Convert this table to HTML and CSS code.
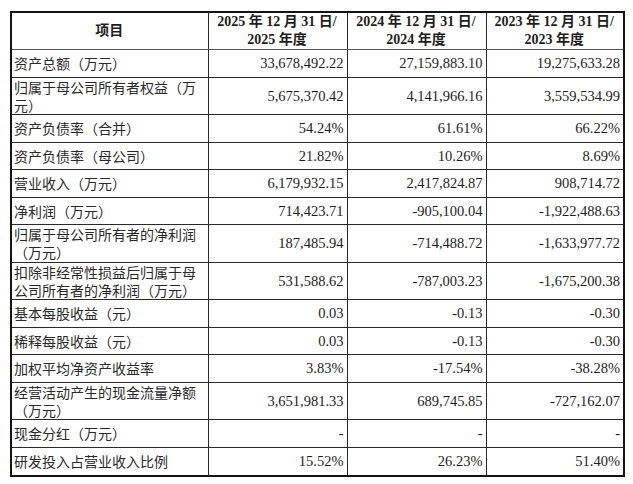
FILE: index.html
```html
<!DOCTYPE html>
<html lang="zh-CN">
<head>
<meta charset="utf-8">
<title>主要财务数据</title>
<link rel="stylesheet" href="styles.css">
</head>
<body>
<div class="frame">
<table class="fin">
<colgroup>
<col class="c-label"><col class="c-val"><col class="c-val"><col class="c-val c-last">
</colgroup>
<thead>
<tr class="head">
<th>项目</th>
<th>2025 年 12 月 31 日/<br>2025 年度</th>
<th>2024 年 12 月 31 日/<br>2024 年度</th>
<th>2023 年 12 月 31 日/<br>2023 年度</th>
</tr>
</thead>
<tbody>
<tr class="one"><td>资产总额（万元）</td><td>33,678,492.22</td><td>27,159,883.10</td><td>19,275,633.28</td></tr>
<tr class="two"><td>归属于母公司所有者权益（万元）</td><td>5,675,370.42</td><td>4,141,966.16</td><td>3,559,534.99</td></tr>
<tr class="one"><td>资产负债率（合并）</td><td>54.24%</td><td>61.61%</td><td>66.22%</td></tr>
<tr class="one"><td>资产负债率（母公司）</td><td>21.82%</td><td>10.26%</td><td>8.69%</td></tr>
<tr class="one"><td>营业收入（万元）</td><td>6,179,932.15</td><td>2,417,824.87</td><td>908,714.72</td></tr>
<tr class="one"><td>净利润（万元）</td><td>714,423.71</td><td>-905,100.04</td><td>-1,922,488.63</td></tr>
<tr class="two"><td>归属于母公司所有者的净利润（万元）</td><td>187,485.94</td><td>-714,488.72</td><td>-1,633,977.72</td></tr>
<tr class="two"><td>扣除非经常性损益后归属于母公司所有者的净利润（万元）</td><td>531,588.62</td><td>-787,003.23</td><td>-1,675,200.38</td></tr>
<tr class="one"><td>基本每股收益（元）</td><td>0.03</td><td>-0.13</td><td>-0.30</td></tr>
<tr class="one"><td>稀释每股收益（元）</td><td>0.03</td><td>-0.13</td><td>-0.30</td></tr>
<tr class="one"><td>加权平均净资产收益率</td><td>3.83%</td><td>-17.54%</td><td>-38.28%</td></tr>
<tr class="two"><td>经营活动产生的现金流量净额（万元）</td><td>3,651,981.33</td><td>689,745.85</td><td>-727,162.07</td></tr>
<tr class="one"><td>现金分红（万元）</td><td>-</td><td>-</td><td>-</td></tr>
<tr class="one last"><td>研发投入占营业收入比例</td><td>15.52%</td><td>26.23%</td><td>51.40%</td></tr>
</tbody>
</table>
</div>
</body>
</html>
```

FILE: styles.css
```css
html, body {
  margin: 0;
  padding: 0;
  background: #ffffff;
}

body {
  padding: 11px 0 0 10px;
  font-family: "Liberation Serif", "Noto Sans CJK SC", serif;
  color: #1e1e1e;
}

.frame {
  width: 611px;
  border: 2px solid #141414;
}

.fin {
  width: 611px;
  border-collapse: collapse;
  table-layout: fixed;
}

.c-label { width: 196px; }
.c-val { width: 139px; }
.c-last { width: 137px; }

.fin th,
.fin td {
  border-right: 1px solid #2a2a2a;
  border-bottom: 1px solid #2a2a2a;
  padding: 0 3px 0 2px;
  line-height: 18px;
  vertical-align: middle;
}

.fin th:last-child,
.fin td:last-child {
  border-right: none;
}

.fin tr.last td {
  border-bottom: none;
}

.head th {
  height: 36px;
  font-size: 14px;
  font-weight: bold;
  text-align: center;
  font-family: "Liberation Serif", "Noto Sans CJK SC", serif;
  border-bottom-color: #555;
}

.fin td {
  font-size: 14.5px;
  text-align: right;
  white-space: nowrap;
}

.fin td:first-child {
  text-align: left;
  white-space: normal;
  font-family: "Noto Sans CJK SC", sans-serif;
  font-size: 14px;
  color: #2a2a2a;
}

.one td { height: 26.5px; }
.two td { height: 36.5px; }
.last td { height: 27px; }
```
